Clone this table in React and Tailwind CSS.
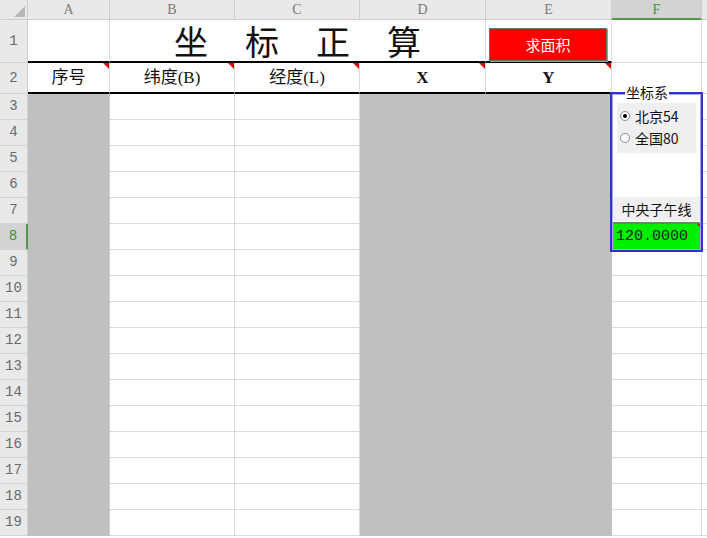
import React from "react";

const cjk = { fontFamily: '"Liberation Serif", "Noto Sans CJK SC", serif' };
const sans = { fontFamily: '"Noto Sans CJK SC", "Noto Sans", sans-serif' };
const mono = { fontFamily: '"Liberation Mono", "Noto Sans CJK SC", monospace' };

const colLetters = ["A", "B", "C", "D", "E", "F"];
const bodyRows = Array.from({ length: 17 }, (_, i) => i + 3);

/* small red comment mark in the top-right corner of a cell */
const Note = () => (
  <span className="absolute right-0 top-0 w-0 h-0 border-t-[6px] border-l-[6px] border-t-[#e00000] border-l-transparent" />
);

const RowHead = ({ n, active }) => (
  <div
    style={mono}
    className={`flex items-center justify-center text-[14px] border-b border-[#d2d2d2] ${
      active
        ? "bg-[#d3d3d3] text-[#3f8f3a] border-r-2 border-r-[#4f9a4a]"
        : "bg-[#e9e9e9] text-[#6a6a6a] border-r border-r-[#cdcdcd]"
    }`}
  >
    {n}
  </div>
);

const Radio = ({ checked, label }) => (
  <div className="flex items-center h-[22px] pl-[3px] gap-[5px]">
    <span className="w-[10px] h-[10px] rounded-full bg-white border border-[#8a8a8a] flex items-center justify-center">
      {checked && <span className="w-[4px] h-[4px] rounded-full bg-black" />}
    </span>
    <span style={sans} className="text-[14px] leading-none text-[#111]">
      {label}
    </span>
  </div>
);

export default function App() {
  return (
    <div className="relative w-[707px] h-[538px] bg-white overflow-hidden">
      <div className="grid grid-cols-[28px_82px_125px_125px_126px_126px_90px_5px] grid-rows-[20px_43px_31px_repeat(17,26px)]">
        {/* ========== COLUMN HEADERS ========== */}
        <div className="bg-[#e9e9e9] border-r border-b border-[#cdcdcd] flex items-end justify-end p-[2px]">
          <span className="w-0 h-0 border-b-[11px] border-l-[11px] border-b-[#b9b9b9] border-l-transparent" />
        </div>
        {colLetters.map((c) => (
          <div
            key={c}
            style={{ fontFamily: '"Liberation Serif", serif' }}
            className={`flex items-center justify-center text-[14px] ${
              c === "F"
                ? "bg-[#d3d3d3] text-[#3f8f3a] border-b-2 border-b-[#4f9a4a] border-r border-r-[#cdcdcd]"
                : "bg-[#e9e9e9] text-[#7a7a7a] border-b border-r border-[#cdcdcd]"
            }`}
          >
            {c}
          </div>
        ))}
        <div className="bg-[#e9e9e9] border-b border-[#cdcdcd]" />

        {/* ========== ROW 1 ========== */}
        <RowHead n={1} />
        <div className="border-r border-r-[#dadada] border-b-2 border-b-black" />
        <div
          style={cjk}
          className="col-span-3 border-r border-r-[#dadada] border-b-2 border-b-black flex items-center justify-center gap-[37px] pt-[6px] text-[34px] leading-none text-[#111]"
        >
          <span>坐</span>
          <span>标</span>
          <span>正</span>
          <span>算</span>
        </div>
        <div className="border-r border-r-[#dadada] border-b-2 border-b-black pt-[8px] pl-[3px] pr-[4px]">
          <button
            style={sans}
            className="w-full h-full bg-[#ff0000] border border-[#707070] shadow-[1px_1px_0_#9a9a9a] text-white text-[15px] leading-none"
          >
            求面积
          </button>
        </div>
        <div className="border-r border-b border-[#dadada]" />
        <div className="border-b border-[#dadada]" />

        {/* ========== ROW 2 ========== */}
        <RowHead n={2} />
        {["序号", "纬度(B)", "经度(L)", "X", "Y"].map((t) => (
          <div
            key={t}
            style={cjk}
            className={`relative flex items-center justify-center text-[17px] text-[#111] border-r border-r-[#dadada] border-b-2 border-b-black ${
              t === "X" || t === "Y" ? "font-bold" : ""
            }`}
          >
            {t}
            <Note />
          </div>
        ))}
        <div className="border-r border-b border-[#dadada]" />
        <div className="border-b border-[#dadada]" />

        {/* ========== DATA ROWS ========== */}
        {bodyRows.map((r) => (
          <React.Fragment key={r}>
            <RowHead n={r} active={r === 8} />
            <div className="bg-[#c0c0c0] border-r border-r-[#d0d0d0] border-b border-b-[#c0c0c0]" />
            <div className="border-r border-b border-[#dadada]" />
            <div className="border-r border-b border-[#dadada]" />
            <div className="bg-[#c0c0c0]" />
            <div className="bg-[#c0c0c0]" />
            <div className="border-r border-b border-[#dadada]" />
            <div className="border-b border-[#dadada]" />
          </React.Fragment>
        ))}
      </div>

      {/* ========== COORDINATE SYSTEM GROUP BOX (floating control) ========== */}
      <div className="absolute left-[610px] top-[92px] w-[93px] h-[160px] border-2 border-[#3232d2]">
        <div className="relative h-full border border-[#a4a4f2] bg-white flex flex-col">
          <span
            style={sans}
            className="absolute -top-[11px] left-[12px] bg-white px-[1px] text-[14px] leading-[16px] text-[#111]"
          >
            坐标系
          </span>
          <div className="mt-[8px] mx-[4px] h-[50px] bg-[#efefef] pt-[2px]">
            <Radio checked label="北京54" />
            <Radio label="全国80" />
          </div>
          <div
            style={sans}
            className="mt-[44px] h-[24px] bg-[#f0f0f0] flex items-center justify-center text-[14px] text-[#111]"
          >
            中央子午线
          </div>
          <div className="relative mt-[1px] flex-1 bg-[#00ee00] border-t-2 border-t-[#5b8f55] flex items-center pl-[3px]">
            <span style={mono} className="text-[15px] leading-none text-[#1c1c1c]">
              120.0000
            </span>
            <span className="absolute right-0 top-0 w-0 h-0 border-t-[3px] border-l-[3px] border-t-[#e00000] border-l-transparent" />
          </div>
        </div>
      </div>
    </div>
  );
}
